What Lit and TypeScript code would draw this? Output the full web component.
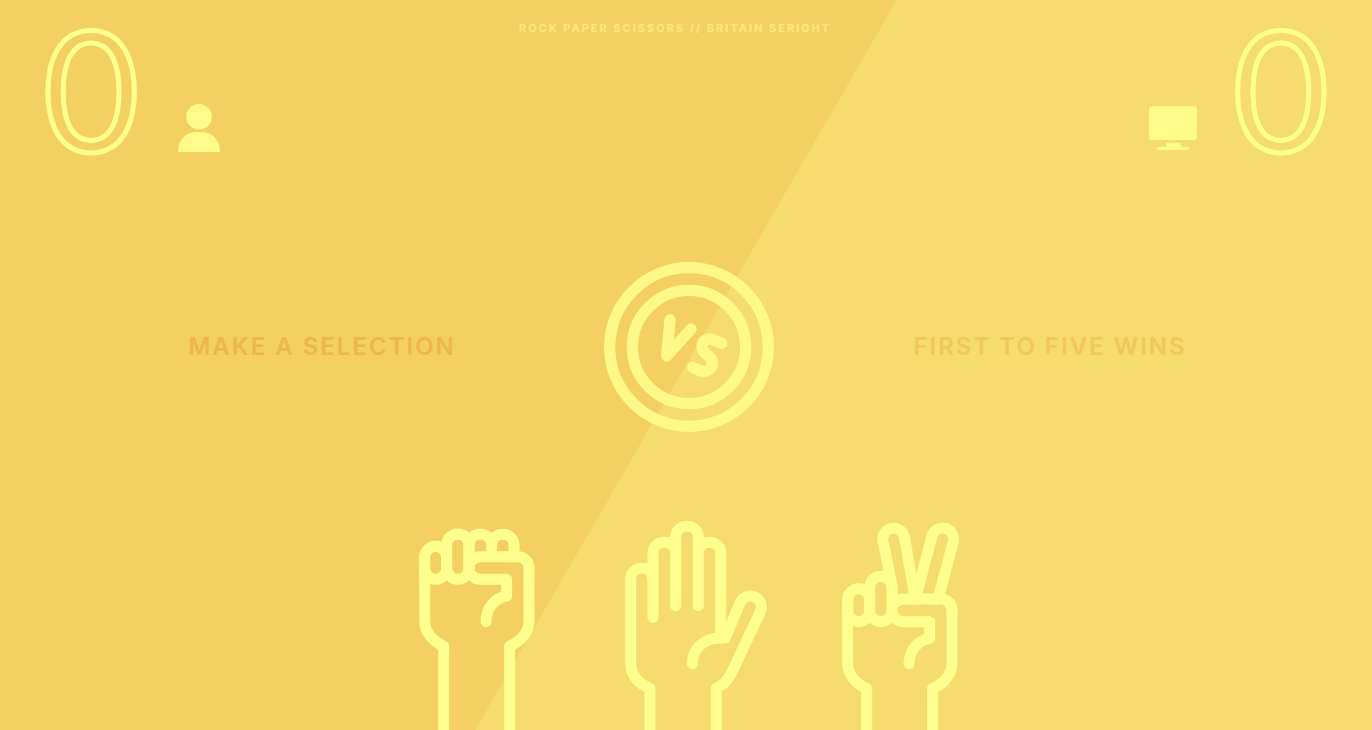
import { LitElement, html, css, svg } from "lit";
import { customElement, property, state } from "lit/decorators.js";

type Move = "rock" | "paper" | "scissors";

const fist = svg`
  <rect x="74" y="139" width="66" height="99" rx="33" />
  <rect x="140" y="102" width="67" height="136" rx="33" />
  <path d="M387 203 V362 C387 396 362 425 329 438 V720" />
  <path d="M74 170 V362 C74 396 98 425 131 438 V720" />
  <path d="M341 170 H241 C223 170 207 185 207 204 C207 223 223 238 241 238 H320 V288 C284 294 258 325 258 365" />
  <path d="M330 170 H354 C372 170 387 185 387 203" />`;

const hands = {
  rock: svg`${fist}
    <path d="M207 200 V136 C207 92 275 92 275 136 V170 V136 C275 92 342 92 342 136 V170" />`,
  paper: svg`
    <path d="M129 352 V238 C129 194 62 194 62 238 V490 C62 524 86 552 120 565 V720" />
    <path d="M129 238 V160 C129 116 197 116 197 160 V317 V112 C197 68 265 68 265 112 V317 V160 C265 116 332 116 332 160 V414" />
    <path d="M247 491 C247 446 281 414 332 414 H345 L391 307 A33 33 0 0 1 451 335 L366 516 C356 538 342 554 319 565 V720" />`,
  scissors: svg`<g transform="translate(9 127)">${fist}</g>
    <path d="M213 240 L188 120 A33 33 0 0 1 253 110 L286 297 L336 108 A33 33 0 0 1 400 124 L356 290" />
    <path d="M213 240 L217 262 V310" />`,
};

@customElement("score-board")
export class ScoreBoard extends LitElement {
  @property() who: "player" | "computer" = "player";
  @property({ type: Number }) score = 0;

  static styles = css`
    :host { display: block; }
    .board { display: flex; align-items: flex-end; gap: 36px; }
    .board.computer { flex-direction: row-reverse; }
    .score {
      font: 400 166px/160px Lato, sans-serif;
      color: transparent;
      -webkit-text-stroke: 5px #ffff90;
    }
    .icon { display: block; width: 48px; height: 48px; margin-bottom: 16px; fill: #fffb8a; }
  `;

  render() {
    return html`<div class="board ${this.who}">
      <span class="score">${this.score}</span>
      <svg class="icon" viewBox="0 0 48 48" role="img" aria-label=${this.who}>
        ${this.who === "player"
          ? svg`<circle cx="24" cy="12.8" r="12.8" />
              <path d="M3 47 C3 36 11 28 21 28 H27 C37 28 45 36 45 47 Q45 48 44 48 H4 Q3 48 3 47 Z" />`
          : svg`<rect x="0" y="2.300" width="48" height="33.700" rx="3" />
              <path d="M17 39.500 V42.700 H9 Q7.500 42.700 7.500 44.500 T9 46 H39 Q40.500 46 40.500 44.500 T39 42.700 H32 V39.500 Q32 38.800 31 38.800 H18 Q17 38.800 17 39.500 Z" />`}
      </svg>
    </div>`;
  }
}

@customElement("app-root")
export class AppRoot extends LitElement {
  @state() private scores = { player: 0, computer: 0 };
  @state() private left = "Make a selection";
  @state() private right = "First to five wins";

  static styles = css`
    :host {
      display: block;
      font-family: Inter, sans-serif;
    }
    .game {
      box-sizing: border-box;
      min-height: 100vh;
      display: flex;
      flex-direction: column;
      overflow: hidden;
      background: linear-gradient(120deg, #f4d062 50%, #f6dc6e 50%);
    }
    .top {
      display: grid;
      grid-template-columns: 1fr auto 1fr;
      align-items: start;
      padding: 8px 43px 6px;
    }
    .top score-board:last-child { justify-self: end; }
    .title {
      margin: 12px 0 0;
      padding-right: 22px;
      font-size: 11px;
      line-height: 16px;
      font-weight: 700;
      letter-spacing: 2px;
      text-transform: uppercase;
      color: #fbe87a;
    }
    .arena {
      flex: 1;
      display: grid;
      grid-template-columns: repeat(3, 1fr);
      align-items: center;
      justify-items: center;
      padding: 0 140px;
    }
    .message {
      margin: 0;
      font-size: 24px;
      line-height: 32px;
      font-weight: 600;
      letter-spacing: 2px;
      text-transform: uppercase;
      white-space: nowrap;
      color: #efb74b;
    }
    .message.goal { color: #f2c65a; }
    .versus {
      display: block;
      width: 170px;
      height: 170px;
      margin-left: 6px;
      fill: none;
      stroke: #fffd8c;
      stroke-width: 34;
      stroke-linecap: round;
      stroke-linejoin: round;
      opacity: 0.9;
    }
    .moves { display: flex; justify-content: center; gap: 40px; }
    .move {
      border: 0;
      padding: 0;
      background: none;
      cursor: pointer;
    }
    .hand {
      display: block;
      width: 170px;
      height: 210px;
      fill: none;
      stroke: #ffff90;
      stroke-width: 33;
      stroke-linecap: round;
      stroke-linejoin: round;
    }
  `;

  private play(move: Move) {
    const moves: Move[] = ["rock", "paper", "scissors"];
    const reply = moves[Math.floor(Math.random() * 3)];
    const result = (moves.indexOf(move) - moves.indexOf(reply) + 3) % 3;
    const { player, computer } = this.scores;
    this.scores = {
      player: player + (result === 1 ? 1 : 0),
      computer: computer + (result === 2 ? 1 : 0),
    };
    this.left = move;
    this.right = reply;
  }

  render() {
    return html`<div class="game">
      <header class="top">
        <score-board who="player" .score=${this.scores.player}></score-board>
        <h1 class="title">Rock Paper Scissors // Britain Seright</h1>
        <score-board who="computer" .score=${this.scores.computer}></score-board>
      </header>
      <main class="arena">
        <p class="message">${this.left}</p>
        <svg class="versus" viewBox="0 0 510 510" role="img" aria-label="versus">
          <circle cx="255" cy="255" r="238" />
          <circle cx="255" cy="255" r="170" />
          <path d="M198 174 L188 282 L261 201" />
          <path d="M353 244 L326 233 C307 226 294 239 294 253 C294 283 325 275 325 303 C325 321 309 332 291 327 L266 316" />
        </svg>
        <p class="message goal">${this.right}</p>
      </main>
      <div class="moves">
        ${(Object.keys(hands) as Move[]).map(
          (m) => html`<button class="move" aria-label=${m} @click=${() => this.play(m)}>
            <svg class="hand" viewBox="-27 60 510 630" aria-hidden="true">${hands[m]}</svg>
          </button>`
        )}
      </div>
    </div>`;
  }
}
